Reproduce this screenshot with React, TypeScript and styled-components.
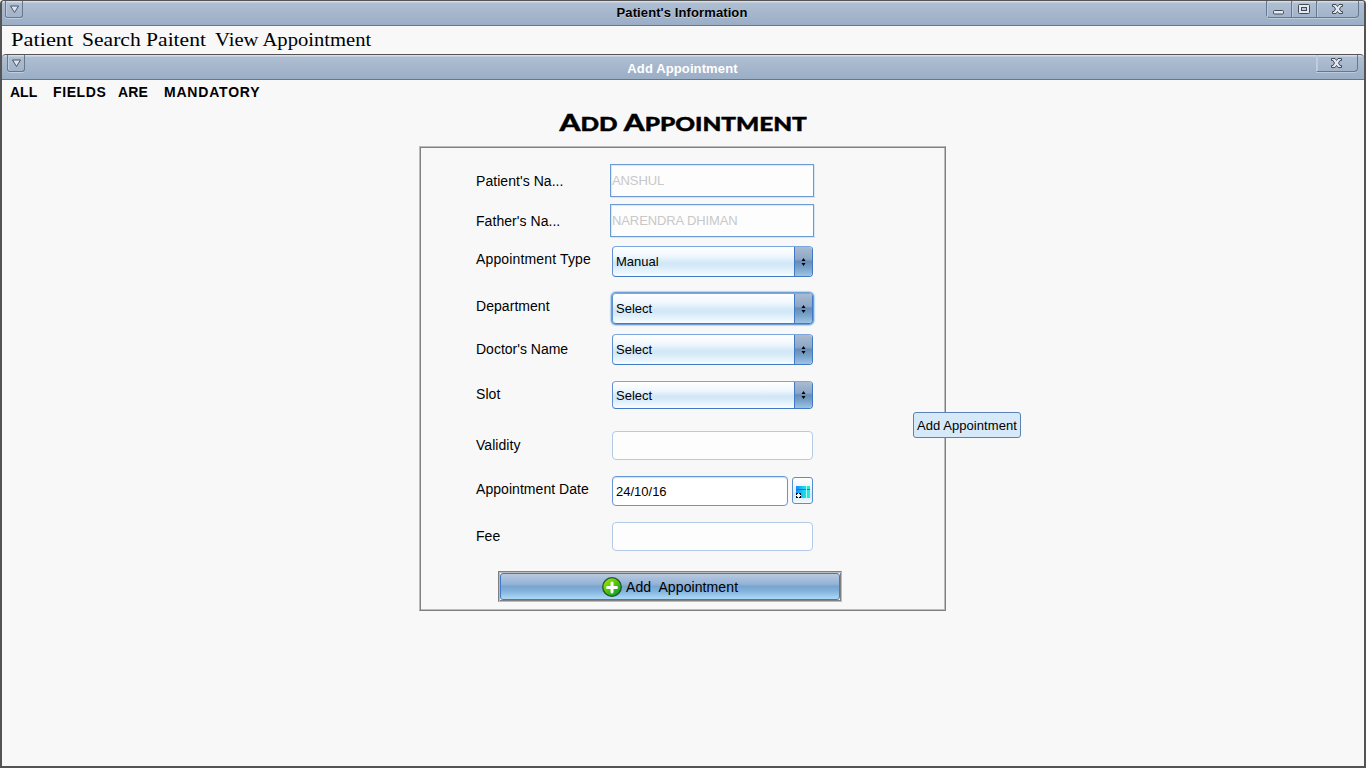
import React from "react";
import styled, { createGlobalStyle } from "styled-components";

const GlobalStyle = createGlobalStyle`
  * { box-sizing: border-box; }
  html, body { margin: 0; padding: 0; overflow: hidden; }
  body { font-family: "Liberation Sans", Arial, sans-serif; color: #000; background: #f8f8f8; }
`;

const Window = styled.div`
  position: relative;
  width: 1366px;
  height: 768px;
  display: flex;
  flex-direction: column;
  background: #f8f8f8;
  border: 2px solid #545454;
  border-top-width: 1px;
  border-radius: 4px 4px 0 0;
  overflow: hidden;
`;

const TitleBar = styled.header<{ $inner?: boolean }>`
  height: ${(p) => (p.$inner ? 26 : 25)}px;
  flex: none;
  display: grid;
  grid-template-columns: 1fr auto 1fr;
  align-items: start;
  padding: 0 ${(p) => (p.$inner ? 6 : 5)}px 0 ${(p) => (p.$inner ? 5 : 3)}px;
  background: linear-gradient(#d5dde8 0 1px, #afbed2 2px, #9aaec6 100%);
  border-bottom: 1px solid #567aa3;
  border-top: ${(p) => (p.$inner ? "1px solid #545454" : "0")};
  border-radius: ${(p) => (p.$inner ? "4px 4px 0 0" : "0")};
`;

const TitleText = styled.h1<{ $light?: boolean }>`
  margin: ${(p) => (p.$light ? 6 : 4)}px 0 0;
  font-size: 13px;
  line-height: 15px;
  font-weight: bold;
  letter-spacing: ${(p) => (p.$light ? 0.12 : 0.1)}px;
  color: ${(p) => (p.$light ? "#fff" : "#000")};
  text-shadow: ${(p) => (p.$light ? "none" : "0 1px 0 rgba(255,255,255,.45)")};
`;

const MenuHandle = styled.div`
  width: 18px;
  height: 17px;
  display: flex;
  justify-content: center;
  padding-top: 4px;
  border: 1px solid #66788e;
  border-top: 0;
  border-radius: 0 0 3px 3px;
  box-shadow: inset 1px 0 #c2cedd, 0 1px #c2cedd;
`;

const WindowButtons = styled.div<{ $open?: boolean }>`
  justify-self: end;
  display: flex;
  height: 17px;
  border: 1px solid #66788e;
  border-top: 0;
  border-left-color: ${(p) => (p.$open ? "#c2cedd" : "#66788e")};
  border-radius: 0 0 4px ${(p) => (p.$open ? 0 : 4)}px;
  box-shadow: 0 1px #bdcada;
`;

const WindowButton = styled.div<{ $w: number; $pad?: number }>`
  width: ${(p) => p.$w}px;
  display: flex;
  justify-content: center;
  padding: 2px ${(p) => p.$pad ?? 2}px 0 0;
  box-shadow: inset 1px 0 #bdcada;
  & + & { border-left: 1px solid #66788e; }
`;

const MenuBar = styled.nav`
  height: 28px;
  flex: none;
  display: flex;
  padding-left: 9px;
`;

const MenuItem = styled.span<{ $w: number; $stretch: number }>`
  width: ${(p) => p.$w}px;
  font-family: "Liberation Serif", "Times New Roman", serif;
  font-size: 19px;
  line-height: 28px;
  white-space: nowrap;
  transform: scaleX(${(p) => p.$stretch});
  transform-origin: left;
`;

const Content = styled.main`
  flex: 1;
  display: flex;
  flex-direction: column;
  align-items: center;
`;

const Notice = styled.p`
  align-self: flex-start;
  margin: 4px 0 0 8px;
  font-size: 14px;
  line-height: 16px;
  font-weight: bold;
  display: flex;
`;

const NoticeWord = styled.span<{ $w: number; $track?: number }>`
  width: ${(p) => p.$w}px;
  letter-spacing: ${(p) => p.$track ?? 0.1}px;
`;

const Heading = styled.h2`
  margin: 8px 0 0;
  font-family: Lato, "Liberation Sans", sans-serif;
  font-weight: 900;
  font-size: 22px;
  line-height: 30px;
  white-space: nowrap;
  transform: scaleX(1.355);
  -webkit-text-stroke: 0.4px #000;
  & span { font-size: 18px; }
`;

const Panel = styled.section`
  width: 527px;
  height: 465px;
  margin: 7px 1px 0 0;
  border: 1px solid;
  border-color: #bcbcbc #808080 #808080 #bcbcbc;
  box-shadow: inset 1px 1px #808080, inset -1px -1px #bcbcbc;
  padding: 17px 0 0 56px;
`;

const Row = styled.div<{ $gap: number; $h: number }>`
  display: flex;
  height: ${(p) => p.$h}px;
  margin-top: ${(p) => p.$gap}px;
`;

const Label = styled.label<{ $top: number; $track?: number }>`
  width: 136px;
  margin-top: ${(p) => p.$top}px;
  font-size: 14px;
  line-height: 16px;
  letter-spacing: ${(p) => p.$track ?? 0.05}px;
`;

const NameField = styled.div`
  width: 204px;
  margin-left: -2px;
  padding-left: 1px;
  border: 1px solid #6c9ad5;
  box-shadow: inset 1px 1px 1px #d8e8f7, 1px 1px #d5e6f6;
  background: #fdfdfd;
  color: #c8c8c8;
  font-size: 13px;
  line-height: 32px;
  letter-spacing: -0.1px;
`;

const Combo = styled.div<{ $focused?: boolean }>`
  width: 201px;
  display: flex;
  border: 1px solid;
  border-color: #7ba6de #4279c4 #4279c4 #6092d2;
  border-radius: 4px;
  overflow: hidden;
  background: linear-gradient(#fff, #f1f8fd 30%, #d2e7f7 55%, #d4e9f8 65%, #f8fdff);
  box-shadow: ${(p) => (p.$focused ? "0 0 0 1px #6f9fd6, 0 0 1px 2px #b9d5ef" : "none")};
`;

const ComboValue = styled.span`
  flex: 1;
  align-self: center;
  padding-left: 3px;
  font-size: 13px;
  line-height: 15px;
`;

const ComboArrow = styled.span`
  width: 18px;
  display: flex;
  align-items: center;
  justify-content: center;
  border-left: 1px solid #4279c4;
  background: linear-gradient(#a9bbd2, #8ca7c6 42%, #668db7 50%, #769fc8 70%, #9dc3e3);
`;

const TextField = styled.div<{ $w: number; $enabled?: boolean }>`
  width: ${(p) => p.$w}px;
  padding-left: 3px;
  border: 1px solid ${(p) => (p.$enabled ? "#6796d4" : "#b4cbe8")};
  border-radius: 4px;
  background: ${(p) => (p.$enabled ? "#fff" : "#fdfdfd")};
  box-shadow: ${(p) => (p.$enabled ? "inset 0 1px 1px #dcdce4" : "none")};
  font-size: 13px;
  line-height: 29px;
`;

const DateButton = styled.div`
  width: 21px;
  height: 27px;
  margin: 1px 0 0 4px;
  display: flex;
  align-items: center;
  justify-content: center;
  padding: 2px 0 0 1px;
  border: 1px solid #5c8dcb;
  border-radius: 3px;
  background: linear-gradient(#fff, #e4f1fb 50%, #d5e9f8 70%, #f3faff);
`;

const SubmitFrame = styled.div`
  width: 344px;
  height: 31px;
  margin: 20px 0 0 22px;
  padding: 1px;
  border: 1px solid;
  border-color: #808080 #bcbcbc #bcbcbc #808080;
  box-shadow: inset 1px 1px #bcbcbc, inset -1px -1px #808080;
`;

const Submit = styled.div`
  width: 340px;
  height: 27px;
  display: flex;
  align-items: center;
  padding-left: 101px;
  gap: 4px;
  border: 1px solid #4279c4;
  border-radius: 3px;
  background: linear-gradient(#b8c9df, #94b3d7 40%, #79a4d0 50%, #82b2dd 68%, #acdaf5);
  font-size: 14px;
  white-space: pre;
  letter-spacing: 0.1px;
`;

const Tooltip = styled.div`
  position: absolute;
  left: 911px;
  top: 411px;
  width: 108px;
  height: 26px;
  padding-left: 3px;
  border: 1px solid #5a82b4;
  border-radius: 3px;
  background: #d6e9f8;
  font-size: 13px;
  line-height: 25px;
  letter-spacing: 0.06px;
  white-space: nowrap;
`;

const HandleIcon = () => (
  <svg width="11" height="9" viewBox="0 0 11 9">
    <path d="M1.5 1h8L5.5 7.5z" fill="#dce5ef" stroke="#4a5563" />
  </svg>
);

const MinimizeIcon = () => (
  <svg width="13" height="13" viewBox="0 0 13 13">
    <rect x="1.500" y="7.500" width="10" height="3.500" rx="1" fill="#e4e9ef" stroke="#424c58" />
  </svg>
);

const RestoreIcon = () => (
  <svg width="13" height="13" viewBox="0 0 13 13">
    <rect x=".5" y="1.500" width="11" height="9" rx="1" fill="#e4e9ef" stroke="#424c58" />
    <rect x="3.500" y="4.500" width="5" height="3" fill="#b9c7d8" stroke="#424c58" />
  </svg>
);

const CloseIcon = () => (
  <svg width="13" height="13" viewBox="0 0 13 13">
    <path
      d="M1.500 1.500h3.500l1.500 2 1.500-2h3.500v2H10L8.500 6 10 8.500h1.500v2H8l-1.500-2-1.500 2H1.500v-2H3L4.500 6 3 3.500H1.500z"
      fill="#e4e9ef"
      stroke="#424c58"
    />
  </svg>
);

const ArrowsIcon = () => (
  <svg width="5" height="10" viewBox="0 0 5 10">
    <path d="M2.500 1 4.500 4h-4zM2.500 9l2-3h-4z" fill="#000" />
  </svg>
);

const CalendarIcon = () => (
  <svg width="14" height="12" viewBox="0 0 14 12" shapeRendering="crispEdges">
    <defs>
      <linearGradient id="calendarFill">
        <stop offset="0" stopColor="#1488fa" />
        <stop offset=".55" stopColor="#20d0f0" />
        <stop offset="1" stopColor="#28f0d0" />
      </linearGradient>
    </defs>
    <path d="M0 0h14v12H0z" fill="url(#calendarFill)" />
    <path d="M0 3h14v1H0z" fill="#147b9c" />
    <path d="M10 0h1v12h-1z" fill="#a5fff0" />
    <path d="M0 7h5v5H0z" fill="#e8f5fc" />
    <path d="M0 7h2v1H1v1H0zM3 7h2v2H4V8H3zM0 10h1v1h1v1H0zM4 10h1v2H3v-1h1z" fill="#000" />
  </svg>
);

const PlusIcon = () => (
  <svg width="20" height="20" viewBox="0 0 20 20">
    <defs>
      <linearGradient id="plusFill" x2=".8" y2="1">
        <stop offset="0" stopColor="#b0f000" />
        <stop offset=".5" stopColor="#58c80c" />
        <stop offset="1" stopColor="#009a30" />
      </linearGradient>
    </defs>
    <circle cx="10" cy="10" r="9.300" fill="url(#plusFill)" stroke="#24562c" strokeWidth="1.300" />
    <path d="M10 6v9M5.500 10.500h9" stroke="#fff" strokeWidth="3" strokeLinecap="round" />
  </svg>
);

const combos = [
  { label: "Appointment Type", value: "Manual", gap: 9, h: 31, top: 5, track: 0.15 },
  { label: "Department", value: "Select", gap: 16, h: 31, top: 5, focused: true },
  { label: "Doctor's Name", value: "Select", gap: 10, h: 31, top: 7, track: 0 },
  { label: "Slot", value: "Select", gap: 16, h: 28, top: 5 },
];

export default function App() {
  return (
    <>
      <GlobalStyle />
      <Window>
        <TitleBar>
          <MenuHandle><HandleIcon /></MenuHandle>
          <TitleText>Patient's Information</TitleText>
          <WindowButtons>
            <WindowButton $w={24}><MinimizeIcon /></WindowButton>
            <WindowButton $w={25} $pad={0}><RestoreIcon /></WindowButton>
            <WindowButton $w={42} $pad={0}><CloseIcon /></WindowButton>
          </WindowButtons>
        </TitleBar>
        <MenuBar>
          <MenuItem $w={71} $stretch={1.18}>Patient</MenuItem>
          <MenuItem $w={133} $stretch={1.135}>Search Paitent</MenuItem>
          <MenuItem $w={160} $stretch={1.085}>View Appointment</MenuItem>
        </MenuBar>
        <TitleBar $inner>
          <MenuHandle><HandleIcon /></MenuHandle>
          <TitleText $light>Add Appointment</TitleText>
          <WindowButtons $open>
            <WindowButton $w={40}><CloseIcon /></WindowButton>
          </WindowButtons>
        </TitleBar>
        <Content>
          <Notice>
            <NoticeWord $w={43} $track={0}>ALL</NoticeWord>
            <NoticeWord $w={65} $track={0.6}>FIELDS</NoticeWord>
            <NoticeWord $w={46}>ARE</NoticeWord>
            <NoticeWord $w={110} $track={0.8}>MANDATORY</NoticeWord>
          </Notice>
          <Heading>A<span>DD</span> A<span>PPOINTMENT</span></Heading>
          <Panel>
            <Row $gap={0} $h={33}>
              <Label $top={9}>Patient's Na...</Label>
              <NameField>ANSHUL</NameField>
            </Row>
            <Row $gap={7} $h={33}>
              <Label $top={9}>Father's Na...</Label>
              <NameField>NARENDRA DHIMAN</NameField>
            </Row>
            {combos.map((c) => (
              <Row key={c.label} $gap={c.gap} $h={c.h}>
                <Label $top={c.top} $track={c.track}>{c.label}</Label>
                <Combo $focused={c.focused}>
                  <ComboValue>{c.value}</ComboValue>
                  <ComboArrow><ArrowsIcon /></ComboArrow>
                </Combo>
              </Row>
            ))}
            <Row $gap={22} $h={29}>
              <Label $top={6}>Validity</Label>
              <TextField $w={201} />
            </Row>
            <Row $gap={16} $h={30}>
              <Label $top={5}>Appointment Date</Label>
              <TextField $w={176} $enabled>24/10/16</TextField>
              <DateButton><CalendarIcon /></DateButton>
            </Row>
            <Row $gap={16} $h={29}>
              <Label $top={6}>Fee</Label>
              <TextField $w={201} />
            </Row>
            <SubmitFrame>
              <Submit><PlusIcon />Add  Appointment</Submit>
            </SubmitFrame>
          </Panel>
        </Content>
        <Tooltip>Add Appointment</Tooltip>
      </Window>
    </>
  );
}
